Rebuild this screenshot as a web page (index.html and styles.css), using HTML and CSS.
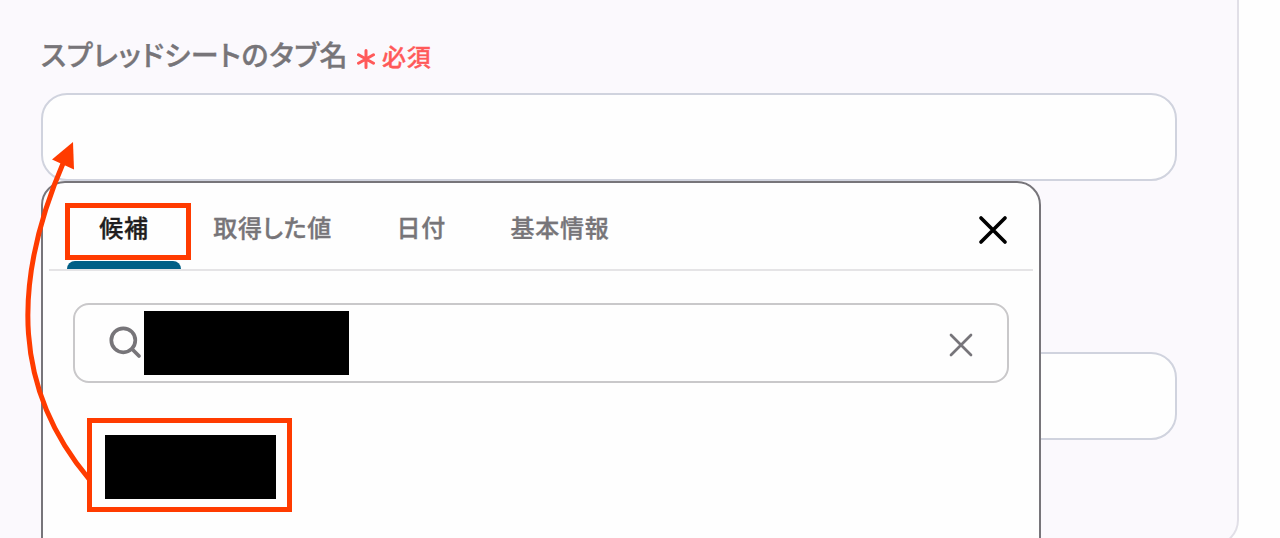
FILE: index.html
```html
<!DOCTYPE html>
<html lang="ja">

<head>
    <meta charset="UTF-8">
    <title>スプレッドシートのタブ名</title>
    <link rel="stylesheet" href="styles.css">
</head>

<body>
    <div class="page">
        <div class="card">
            <div class="form-group">
                <label for="tabName">
                    <span class="label-text">スプレッドシートのタブ名</span>
                    <svg class="asterisk" width="18" height="20" viewBox="0 0 18 20">
                        <path d="M9 1.5v17M1.5 5.7l15 8.6M16.5 5.7l-15 8.6" />
                    </svg>
                    <span class="required">必須</span>
                </label>
                <input type="text" id="tabName">

                <div class="dropdown">
                    <div class="tabs">
                        <div class="tab active">候補</div>
                        <div class="tab">取得した値</div>
                        <div class="tab">日付</div>
                        <div class="tab">基本情報</div>
                        <svg class="close" width="32" height="32" viewBox="0 0 32 32">
                            <path d="M4 4l24 24M28 4L4 28" />
                        </svg>
                    </div>
                    <div class="search">
                        <svg class="search-icon" width="34" height="34" viewBox="0 0 34 34">
                            <circle cx="15.3" cy="15.3" r="12" />
                            <path d="M24 24l7 7" />
                        </svg>
                        <div class="search-mask"></div>
                        <svg class="clear" width="24" height="24" viewBox="0 0 24 24">
                            <path d="M2 2l20 20M22 2L2 22" />
                        </svg>
                    </div>
                    <div class="option">
                        <div class="option-mask"></div>
                    </div>
                </div>
            </div>

            <div class="form-group">
                <input type="text" id="nextField">
            </div>
        </div>

        <!-- arrow from the option to the input -->
        <svg class="arrow" width="100" height="538" viewBox="0 0 100 538">
            <path class="arrow-line" d="M89 479C15 391 10 286 64 161" />
            <path class="arrow-head" d="M73 142L52 159.500L74 169.500Z" />
        </svg>
    </div>
</body>

</html>
```

FILE: styles.css
```css
* {
    box-sizing: border-box;
}

body {
    margin: 0;
    background-color: #fefefe;
    font-family: "Noto Sans CJK JP", sans-serif;
    font-weight: 500;
    font-feature-settings: "palt";
    -webkit-text-stroke: 0.35px;
}

svg {
    display: block;
    flex: none;
    fill: none;
    stroke-linecap: round;
}

.page {
    position: relative;
    height: 538px;
    overflow: hidden;
}

.card {
    width: 1239px;
    height: 546px;
    padding: 35px 60px 0 41px;
    background-color: #fbf9fd;
    border-right: 2px solid #e1dfe7;
    border-bottom: 2px solid #e1dfe7;
    border-bottom-right-radius: 26px;
}

.form-group {
    position: relative;
}

.form-group + .form-group {
    margin-top: 171px;
}

label {
    display: flex;
    align-items: center;
    height: 58px;
    padding-bottom: 20px;
}

.label-text {
    width: 312px;
    font-size: 28px;
    line-height: 40px;
    letter-spacing: 0.7px;
    white-space: nowrap;
    color: #777579;
}

.asterisk {
    margin: 9px 7px 0 4px;
    stroke: #ff5959;
    stroke-width: 3;
}

.required {
    padding-top: 3px;
    font-size: 24px;
    line-height: 36px;
    letter-spacing: 0.7px;
    color: #ff5959;
}

input[type="text"] {
    display: block;
    width: 1136px;
    height: 88px;
    padding: 0 24px;
    font-size: 28px;
    background-color: #fefefe;
    border: 2px solid #d0d3de;
    border-radius: 26px;
}

.dropdown {
    position: absolute;
    top: 146px;
    left: 0;
    z-index: 1;
    width: 1000px;
    height: 400px;
    padding: 0 6px;
    background-color: #fefefe;
    border: 2px solid #77757a;
    border-radius: 24px;
}

.tabs {
    display: flex;
    height: 88px;
    padding-left: 18px;
    border-bottom: 2px solid #e5e4e6;
}

.tab {
    position: relative;
    padding: 26px 32.3px 0;
    font-size: 24px;
    line-height: 36px;
    letter-spacing: 0.7px;
    color: #777579;
}

.tab.active {
    color: #1f1e20;
}

.tab.active::before {
    content: "";
    position: absolute;
    top: 20px;
    left: -2px;
    box-sizing: border-box;
    width: 126px;
    height: 57px;
    border: 5px solid #ff3b00;
}

.tab.active::after {
    content: "";
    position: absolute;
    left: 0;
    bottom: 0;
    width: 114px;
    height: 8px;
    background-color: #005f86;
    border-radius: 8px 8px 0 0;
}

.close {
    margin: 31px 24px 0 auto;
    stroke: #000;
    stroke-width: 3.7;
}

.search {
    display: flex;
    align-items: center;
    width: 936px;
    height: 80px;
    margin: 32px 0 0 24px;
    padding: 0 34px 0 33px;
    border: 2px solid #c9c8ca;
    border-radius: 16px;
}

.search-icon {
    margin-bottom: 2px;
    stroke: #777579;
    stroke-width: 3.7;
}

.search-mask {
    width: 205px;
    height: 64px;
    margin-left: 2px;
    background-color: #000;
}

.clear {
    margin: 4px 0 0 auto;
    stroke: #77757a;
    stroke-width: 2.7;
}

.option {
    width: 205px;
    height: 94px;
    margin: 35px 0 0 38px;
    padding: 12px 13px;
    border: 5px solid #ff3b00;
}

.option-mask {
    width: 171px;
    height: 64px;
    background-color: #000;
}

.arrow {
    position: absolute;
    top: 0;
    left: 0;
    z-index: 2;
}

.arrow-line {
    stroke: #ff3b00;
    stroke-width: 5;
    stroke-linecap: butt;
}

.arrow-head {
    fill: #ff3b00;
}
```
